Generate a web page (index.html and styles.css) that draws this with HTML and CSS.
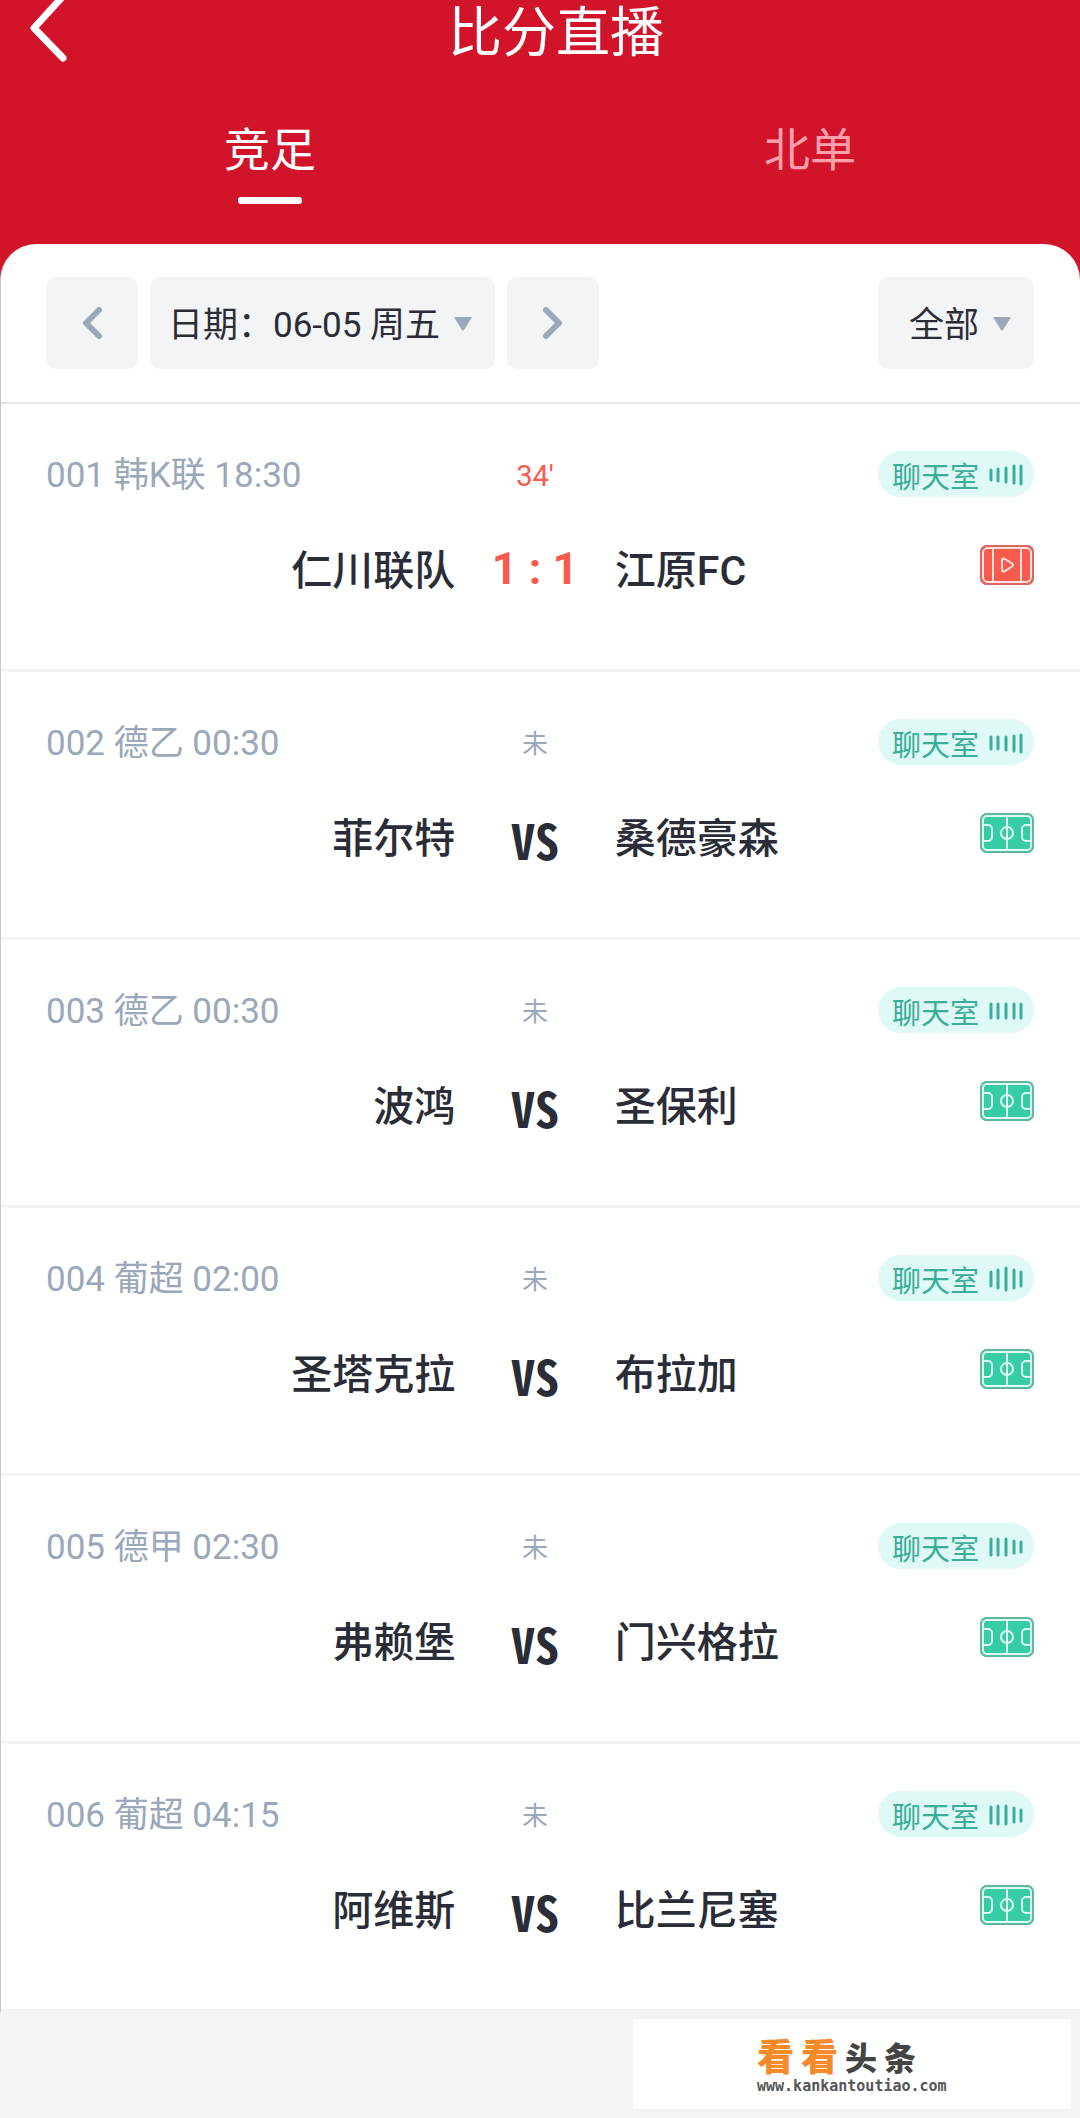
FILE: index.html
```html
<!DOCTYPE html>
<html lang="zh-CN">
<head>
    <meta charset="UTF-8">
    <meta name="viewport" content="width=device-width, initial-scale=1.0">
    <title>比分直播</title>
    <link rel="stylesheet" href="styles.css">
</head>
<body>
    <!-- Shared icons -->
    <svg class="icon-defs" aria-hidden="true">
        <symbol id="icon-pitch" viewBox="0 0 54 40">
            <rect width="54" height="40" rx="7" fill="#36cda6"/>
            <rect x="1" y="1" width="52" height="38" rx="6" fill="none" stroke="#5fb8a0" stroke-width="2"/>
            <g fill="none" stroke="#dffaf3" stroke-width="2">
                <rect x="3" y="3" width="48" height="34" rx="4"/>
                <path d="M27 3v34M3 12h5a4 4 0 0 1 4 4v8a4 4 0 0 1-4 4H3M51 12h-5a4 4 0 0 0-4 4v8a4 4 0 0 0 4 4h5"/>
                <circle cx="27" cy="20" r="6"/>
            </g>
        </symbol>
        <symbol id="icon-video" viewBox="0 0 54 40">
            <rect width="54" height="40" rx="7" fill="#fa5a4b"/>
            <rect x="1" y="1" width="52" height="38" rx="6" fill="none" stroke="#d9685f" stroke-width="2"/>
            <g fill="none" stroke="#ffe2de" stroke-width="2" stroke-linejoin="round">
                <rect x="3" y="3" width="48" height="34" rx="5"/>
                <path d="M13 3v34M41 3v34"/>
                <path d="M22 15.500q0-3 3-1.500l7 4.500q2 1.500 0 3l-7 4.500q-3 1.500-3-1.500z"/>
            </g>
        </symbol>
        <symbol id="icon-down" viewBox="0 0 18 14">
            <path d="M1 0h16q1 0 .5 1L10 13q-1 1-2 0L.5 1Q0 0 1 0z" fill="#9aa8ba"/>
        </symbol>
    </svg>

    <header class="header">
        <div class="title-bar">
            <button class="back-btn" type="button" aria-label="返回">
                <svg width="80" height="62" viewBox="0 0 80 62"><path d="M65-6L34 28l29 30"/></svg>
            </button>
            <h1>比分直播</h1>
        </div>
        <nav class="tabs">
            <a class="tab active" href="#jingzu">竞足</a>
            <a class="tab" href="#beidan">北单</a>
        </nav>
    </header>

    <main class="sheet">
        <div class="toolbar">
            <button class="step-btn" type="button" aria-label="前一天">
                <svg width="20" height="32" viewBox="0 0 20 32"><path d="M17 3L4 16l13 13"/></svg>
            </button>
            <div class="picker picker-date">
                <select aria-label="日期">
                    <option>日期：06-05 周五</option>
                </select>
                <svg class="picker-arrow"><use href="#icon-down"/></svg>
            </div>
            <button class="step-btn" type="button" aria-label="后一天">
                <svg width="20" height="32" viewBox="0 0 20 32"><path d="M3 3l13 13L3 29"/></svg>
            </button>
            <div class="picker picker-filter">
                <select aria-label="赛事">
                    <option>全部</option>
                </select>
                <svg class="picker-arrow"><use href="#icon-down"/></svg>
            </div>
        </div>

        <section class="match live">
            <p class="info">001 韩K联 18:30</p>
            <p class="status">34'</p>
            <a class="chat" href="#chat-001">聊天室
                <svg width="34" height="26" viewBox="0 0 34 26"><path d="M2 8v10M9 7v12M17 6v14M25 4v17M32 4v18"/></svg>
            </a>
            <p class="team home">仁川联队</p>
            <p class="score">1 : 1</p>
            <p class="team away">江原FC</p>
            <svg class="media"><use href="#icon-video"/></svg>
        </section>

        <section class="match">
            <p class="info">002 德乙 00:30</p>
            <p class="status">未</p>
            <a class="chat" href="#chat-002">聊天室
                <svg width="34" height="26" viewBox="0 0 34 26"><path d="M2 7v12M9 7v12M17 7v13M25 6v15M32 5v17"/></svg>
            </a>
            <p class="team home">菲尔特</p>
            <p class="score versus">VS</p>
            <p class="team away">桑德豪森</p>
            <svg class="media"><use href="#icon-pitch"/></svg>
        </section>

        <section class="match">
            <p class="info">003 德乙 00:30</p>
            <p class="status">未</p>
            <a class="chat" href="#chat-003">聊天室
                <svg width="34" height="26" viewBox="0 0 34 26"><path d="M2 6v14M9 6v14M17 6v14M25 6v14M32 6v14"/></svg>
            </a>
            <p class="team home">波鸿</p>
            <p class="score versus">VS</p>
            <p class="team away">圣保利</p>
            <svg class="media"><use href="#icon-pitch"/></svg>
        </section>

        <section class="match">
            <p class="info">004 葡超 02:00</p>
            <p class="status">未</p>
            <a class="chat" href="#chat-004">聊天室
                <svg width="34" height="26" viewBox="0 0 34 26"><path d="M2 6v14M9 4v18M17 2v22M25 4v18M32 6v14"/></svg>
            </a>
            <p class="team home">圣塔克拉</p>
            <p class="score versus">VS</p>
            <p class="team away">布拉加</p>
            <svg class="media"><use href="#icon-pitch"/></svg>
        </section>

        <section class="match">
            <p class="info">005 德甲 02:30</p>
            <p class="status">未</p>
            <a class="chat" href="#chat-005">聊天室
                <svg width="34" height="26" viewBox="0 0 34 26"><path d="M2 5v16M9 5v16M17 5v16M25 7v12M32 8v10"/></svg>
            </a>
            <p class="team home">弗赖堡</p>
            <p class="score versus">VS</p>
            <p class="team away">门兴格拉</p>
            <svg class="media"><use href="#icon-pitch"/></svg>
        </section>

        <section class="match">
            <p class="info">006 葡超 04:15</p>
            <p class="status">未</p>
            <a class="chat" href="#chat-006">聊天室
                <svg width="34" height="26" viewBox="0 0 34 26"><path d="M2 5v16M9 4v18M17 4v18M25 6v14M32 8v11"/></svg>
            </a>
            <p class="team home">阿维斯</p>
            <p class="score versus">VS</p>
            <p class="team away">比兰尼塞</p>
            <svg class="media"><use href="#icon-pitch"/></svg>
        </section>
    </main>

    <footer class="footer">
        <div class="brand">
            <p class="brand-name"><span>看</span><span>看</span><b>头</b><b>条</b></p>
            <p class="brand-url">www.kankantoutiao.com</p>
        </div>
    </footer>
</body>
</html>
```

FILE: styles.css
```css
* {
    box-sizing: border-box;
}

body {
    margin: 0;
    min-height: 100vh;
    display: flex;
    flex-direction: column;
    background: #d2142b;
    color: #2a2d37;
    font-family: Roboto, 'Noto Sans CJK SC', sans-serif;
    font-size: 35px;
}

h1,
p {
    margin: 0;
}

a {
    text-decoration: none;
}

button,
select {
    border: none;
    border-radius: 10px;
    background: #f3f4f6;
    color: inherit;
    font: inherit;
}

.icon-defs {
    position: absolute;
    width: 0;
    height: 0;
}

/* Header */
.header {
    color: #fff;
}

.title-bar {
    display: flex;
    height: 62px;
}

.back-btn {
    width: 80px;
    padding: 0;
    background: none;
}

.back-btn svg {
    display: block;
    fill: none;
    stroke: #fff;
    stroke-width: 7;
    stroke-linecap: round;
    stroke-linejoin: round;
}

h1 {
    flex: 1;
    padding-right: 48px;
    text-align: center;
    font-size: 54px;
    font-weight: 400;
    line-height: 68px;
}

.tabs {
    display: flex;
    padding: 58px 0 40px;
}

.tab {
    flex: 1;
    display: flex;
    flex-direction: column;
    align-items: center;
    gap: 17px;
    color: #ffa0ac;
    font-size: 46px;
    line-height: 60px;
}

.tab::after {
    content: '';
    width: 64px;
    height: 7px;
    border-radius: 3px;
}

.tab.active {
    color: #fff;
}

.tab.active::after {
    background: #fff;
}

/* Sheet and date toolbar */
.sheet {
    border-left: 1px solid #c8c8ca;
    border-radius: 36px 36px 0 0;
    background: #fff;
}

.toolbar {
    display: flex;
    gap: 12px;
    padding: 33px 46px 33px 45px;
    border-bottom: 2px solid #e4e5e7;
}

.step-btn {
    width: 92px;
    height: 92px;
    padding: 0;
}

.step-btn svg {
    display: block;
    margin: 0 auto;
    fill: none;
    stroke: #9aa8ba;
    stroke-width: 6;
    stroke-linecap: round;
    stroke-linejoin: round;
}

.picker {
    position: relative;
}

.picker select {
    height: 92px;
    padding: 5px 54px 0 18px;
    appearance: none;
}

.picker-filter {
    margin-left: auto;
}

.picker-filter select {
    padding-left: 31px;
}

.picker-arrow {
    position: absolute;
    top: 40px;
    right: 23px;
    width: 18px;
    height: 14px;
    pointer-events: none;
}

/* Match rows */
.match {
    display: grid;
    grid-template-columns: 41fr 16fr 42fr;
    grid-template-rows: 46px 60px;
    row-gap: 42px;
    padding: 47px 46px 70px 45px;
    border-bottom: 3px solid #f3f4f6;
}

.info {
    color: #9aa8ba;
    line-height: 50px;
}

.status {
    color: #9aa8ba;
    font-size: 26px;
    line-height: 50px;
    text-align: center;
}

.chat {
    justify-self: end;
    display: flex;
    align-items: center;
    gap: 10px;
    height: 46px;
    padding: 2px 11px 0 14px;
    border-radius: 23px;
    background: #dff9f6;
    color: #3aae98;
    font-size: 29px;
}

.chat svg {
    stroke: #3aae98;
    stroke-width: 3;
    stroke-linecap: round;
}

.team {
    font-size: 41px;
    font-weight: 500;
    line-height: 64px;
}

.home {
    text-align: right;
}

.away,
.media {
    grid-column: 3;
    grid-row: 2;
}

.score {
    font-size: 45px;
    font-weight: 700;
    line-height: 60px;
    text-align: center;
}

/* Half-width capitals keep the mark narrow */
.versus {
    font-family: 'Noto Sans CJK SC', sans-serif;
    font-feature-settings: 'hwid';
    font-size: 48px;
    line-height: 64px;
}

.media {
    justify-self: end;
    width: 54px;
    height: 40px;
    margin-top: 6px;
}

.live .status,
.live .score {
    color: #fa5a4b;
}

.live .status {
    font-size: 29px;
}

/* Footer */
.footer {
    flex: 1;
    display: flex;
    justify-content: flex-end;
    align-items: flex-start;
    padding: 7px 9px 10px;
    background: #f3f4f6;
}

.brand {
    width: 438px;
    height: 90px;
    padding: 22px 0 0 124px;
    background: #fff;
}

.brand-name {
    display: flex;
    align-items: flex-end;
    gap: 7px;
    font-weight: 900;
    line-height: 36px;
}

.brand-name span {
    color: #f58a2b;
    font-size: 37px;
}

.brand-name b {
    color: #444;
    font-size: 32px;
    font-weight: 900;
}

.brand-url {
    color: #555;
    font-family: 'DejaVu Sans Mono', monospace;
    font-size: 15px;
    font-weight: 700;
    line-height: 18px;
}
```
